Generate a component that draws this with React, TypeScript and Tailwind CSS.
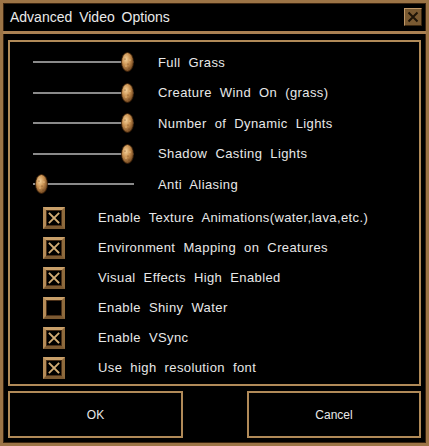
import React from "react";

const font = "font-['Liberation_Sans',Arial,sans-serif]";

function Knob() {
  return (
    <svg width="13" height="20" viewBox="0 0 13 20">
      <defs>
        <radialGradient id="kg" cx="0.38" cy="0.35" r="0.75">
          <stop offset="0" stopColor="#f4d098" />
          <stop offset="0.45" stopColor="#c89050" />
          <stop offset="1" stopColor="#5a3414" />
        </radialGradient>
      </defs>
      <ellipse cx="6.5" cy="10" rx="6" ry="9.5" fill="url(#kg)" stroke="#3a2008" strokeWidth="0.8" />
      <circle cx="4" cy="7" r="0.6" fill="#6a4020" />
      <circle cx="7" cy="12" r="0.6" fill="#6a4020" />
      <circle cx="9" cy="8" r="0.6" fill="#f8e0b0" />
      <circle cx="5" cy="14" r="0.6" fill="#f8e0b0" />
      <circle cx="8" cy="16" r="0.5" fill="#6a4020" />
    </svg>
  );
}

function Slider({ label, min }: { label: string; min?: boolean }) {
  return (
    <div className="h-[30.5px] flex items-center">
      <div className="relative ml-[23px] w-[101px] h-[20px] flex items-center">
        <div className="w-full h-[2px] bg-[#8a8a8a]" />
        <div className={`absolute top-0 ${min ? "left-[2px]" : "left-[88px]"}`}>
          <Knob />
        </div>
      </div>
      <span className="ml-[24px] text-[13px] text-[#e8e8e8] tracking-[0.4px] [word-spacing:4px]">{label}</span>
    </div>
  );
}

function Check({ label, checked }: { label: string; checked: boolean }) {
  return (
    <div className="h-[30px] flex items-center">
      <div className="ml-[33px] w-[22px] h-[22px] border-[3px] border-t-[#c9a06a] border-l-[#b58c58] border-b-[#7c5a32] border-r-[#8e6a3c] shadow-[inset_0_0_0_1px_#4a3018] bg-black flex items-center justify-center">
        {checked && (
          <svg width="14" height="14" viewBox="0 0 14 14">
            <path d="M2.5 2.5 L11.5 11.5 M11.5 2.5 L2.5 11.5" stroke="#d2ac74" strokeWidth="1.8" strokeLinecap="square" />
          </svg>
        )}
      </div>
      <span className="ml-[33px] text-[13px] text-[#e8e8e8] tracking-[0.4px] [word-spacing:4px]">{label}</span>
    </div>
  );
}

export default function App() {
  return (
    <div className={`w-[429px] h-[446px] bg-black border-[3px] border-[#9c7446] shadow-[inset_0_0_0_1px_#3a2410] flex flex-col ${font}`}>
      <div className="h-[31px] flex items-center justify-between pl-[7px] pr-[4px] border-b-[3px] border-[#a98052]">
        <span className="text-[14px] text-[#eaeaea] [word-spacing:3px]">Advanced Video Options</span>
        <div className="w-[18px] h-[18px] bg-[#7a5a32] border border-t-[#c09868] border-l-[#c09868] border-b-[#3c2810] border-r-[#3c2810] flex items-center justify-center">
          <svg width="12" height="12" viewBox="0 0 12 12">
            <path d="M1.5 1.5 L10.5 10.5 M10.5 1.5 L1.5 10.5" stroke="#1e1408" strokeWidth="2" />
          </svg>
        </div>
      </div>
      <div className="flex-1 px-[5px] pt-[6px] pb-[5px] flex flex-col">
        <div className="h-[346px] border-2 border-[#b08a58] pt-[5px]">
          <Slider label="Full Grass" />
          <Slider label="Creature Wind On (grass)" />
          <Slider label="Number of Dynamic Lights" />
          <Slider label="Shadow Casting Lights" />
          <Slider label="Anti Aliasing" min />
          <div className="mt-[3.5px]">
            <Check label="Enable Texture Animations(water,lava,etc.)" checked />
            <Check label="Environment Mapping on Creatures" checked />
            <Check label="Visual Effects High Enabled" checked />
            <Check label="Enable Shiny Water" checked={false} />
            <Check label="Enable VSync" checked />
            <Check label="Use high resolution font" checked />
          </div>
        </div>
        <div className="mt-[5px] flex justify-between">
          <div className="w-[175px] h-[47px] border-2 border-[#b08a58] flex items-center justify-center text-[12px] text-[#e8e8e8]">OK</div>
          <div className="w-[174px] h-[47px] border-2 border-[#b08a58] flex items-center justify-center text-[12px] text-[#e8e8e8]">Cancel</div>
        </div>
      </div>
    </div>
  );
}
